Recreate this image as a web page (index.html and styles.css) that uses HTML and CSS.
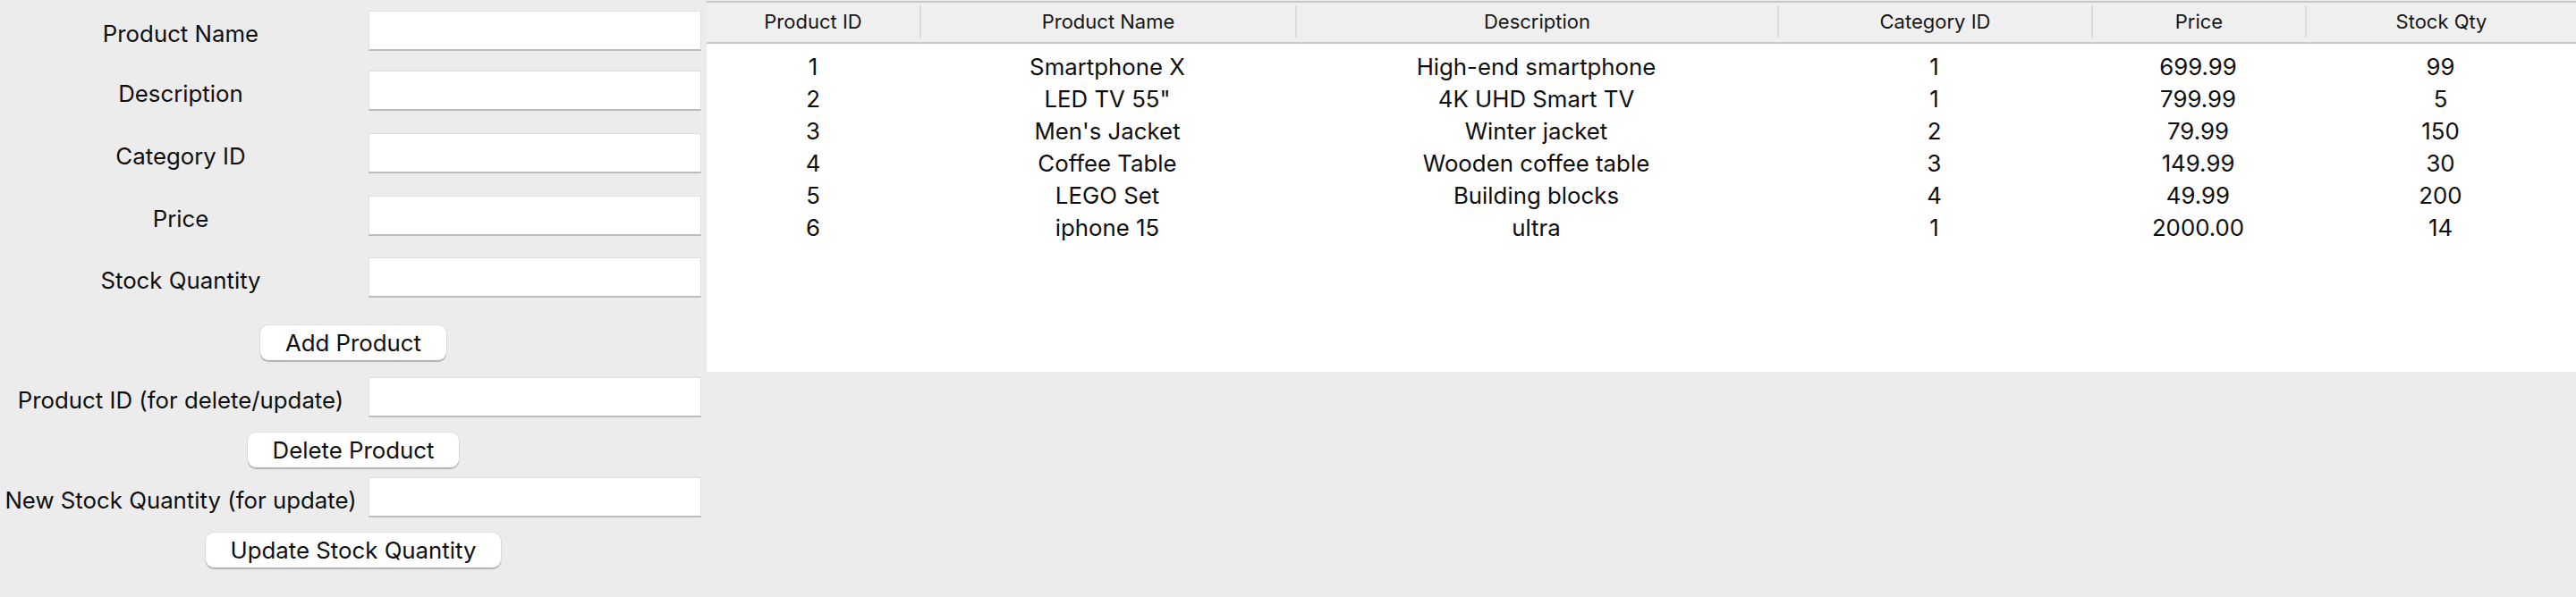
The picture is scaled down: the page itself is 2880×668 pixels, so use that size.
FILE: index.html
```html
<!DOCTYPE html>
<html lang="en">
<head>
<meta charset="utf-8">
<title>Product Manager</title>
<link rel="stylesheet" href="styles.css">
</head>
<body>
<div class="app">
  <div class="form">
    <div class="field r1"><label class="lbl">Product Name</label><div class="entry"></div></div>
    <div class="field r2"><label class="lbl">Description</label><div class="entry"></div></div>
    <div class="field r3"><label class="lbl">Category ID</label><div class="entry"></div></div>
    <div class="field r4"><label class="lbl">Price</label><div class="entry"></div></div>
    <div class="field r5"><label class="lbl">Stock Quantity</label><div class="entry"></div></div>
    <div class="btnrow b1"><button class="btn">Add Product</button></div>
    <div class="field r6"><label class="lbl">Product ID (for delete/update)</label><div class="entry"></div></div>
    <div class="btnrow b2"><button class="btn">Delete Product</button></div>
    <div class="field r7"><label class="lbl">New Stock Quantity (for update)</label><div class="entry"></div></div>
    <div class="btnrow b3"><button class="btn">Update Stock Quantity</button></div>
  </div>
  <div class="table">
    <div class="thead">
      <div class="th first">Product ID</div>
      <div class="th">Product Name</div>
      <div class="th">Description</div>
      <div class="th">Category ID</div>
      <div class="th">Price</div>
      <div class="th">Stock Qty</div>
    </div>
    <div class="tbody">
      <div class="tr"><div>1</div><div>Smartphone X</div><div>High-end smartphone</div><div>1</div><div>699.99</div><div>99</div></div>
      <div class="tr"><div>2</div><div>LED TV 55"</div><div>4K UHD Smart TV</div><div>1</div><div>799.99</div><div>5</div></div>
      <div class="tr"><div>3</div><div>Men's Jacket</div><div>Winter jacket</div><div>2</div><div>79.99</div><div>150</div></div>
      <div class="tr"><div>4</div><div>Coffee Table</div><div>Wooden coffee table</div><div>3</div><div>149.99</div><div>30</div></div>
      <div class="tr"><div>5</div><div>LEGO Set</div><div>Building blocks</div><div>4</div><div>49.99</div><div>200</div></div>
      <div class="tr"><div>6</div><div>iphone 15</div><div>ultra</div><div>1</div><div>2000.00</div><div>14</div></div>
    </div>
  </div>
</div>
</body>
</html>
```
FILE: styles.css
```css
html, body {
  margin: 0;
  padding: 0;
  background: #ececec;
  font-family: Inter, "Liberation Sans", sans-serif;
  color: #0e0e0e;
}
.app {
  display: flex;
  align-items: flex-start;
  width: 2880px;
  height: 668px;
}
.form {
  width: 790px;
  flex: none;
  display: flex;
  flex-direction: column;
}
.field {
  display: grid;
  grid-template-columns: 404px 372px;
  column-gap: 8px;
  align-items: center;
}
.lbl {
  font-size: 25.8px;
  text-align: center;
  padding-top: 5px;
  white-space: nowrap;
}
.entry {
  height: 45px;
  box-sizing: border-box;
  background: #fff;
  border: 1px solid #dedede;
  border-bottom: 2px solid #bcbcbc;
}
.r1 { margin-top: 12px; }
.r2 { margin-top: 22px; }
.r3 { margin-top: 25px; }
.r4 { margin-top: 25px; }
.r5 { margin-top: 24px; }
.b1 { margin-top: 31px; }
.r6 { margin-top: 19px; }
.b2 { margin-top: 17px; }
.r7 { margin-top: 11px; }
.b3 { margin-top: 17px; }
.btnrow {
  display: flex;
  justify-content: center;
}
.btn {
  height: 39px;
  padding: 0 28px;
  border: 0;
  border-radius: 9px;
  background: #fff;
  box-shadow: 0 0 0 1px rgba(0,0,0,0.06), 0 1.5px 1px rgba(0,0,0,0.22);
  font-family: inherit;
  font-size: 25.8px;
  color: #0e0e0e;
  line-height: 39px;
}
.table {
  flex: 1;
  margin-top: 1px;
  border-top: 2px solid #c8c8c8;
}
.thead, .tr {
  display: grid;
  grid-template-columns: 238px 420px 539px 351px 239px 303px;
}
.thead {
  height: 44px;
  background: #efefef;
  border-bottom: 2px solid #c8c8c8;
}
.th {
  margin: 3px 0 5px;
  border-left: 2px solid #dcdcdc;
  display: flex;
  align-items: center;
  justify-content: center;
  font-size: 22px;
  color: #161616;
}
.th.first { border-left: 0; }
.tbody {
  background: #fff;
  height: 359px;
  padding-top: 8px;
}
.tr {
  height: 36px;
  line-height: 36px;
  font-size: 25.8px;
  text-align: center;
}
```
